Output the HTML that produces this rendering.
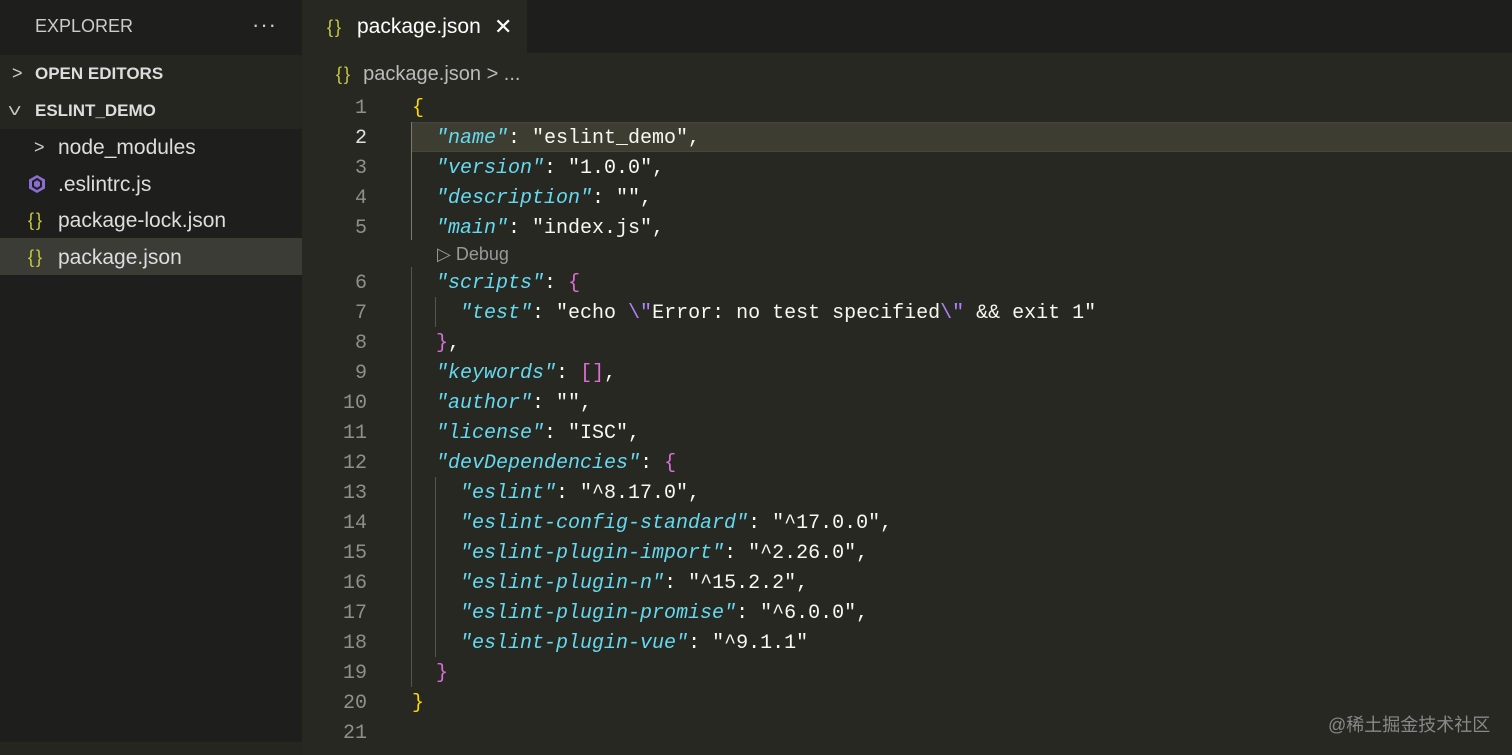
<!DOCTYPE html>
<html><head><meta charset="utf-8"><style>
body{margin:0;width:1512px;height:755px;overflow:hidden;background:#272822;font-family:"Liberation Sans",sans-serif;position:relative}
.side{position:absolute;left:0;top:0;width:302px;height:755px;background:#1e1f1c}
.hdr{position:absolute;left:35px;top:16px;color:#ccc;font-size:18px}
.dots{position:absolute;left:252px;top:12px;color:#ccc;font-size:22px;letter-spacing:1px}
.sec{position:absolute;left:0;width:302px;height:37px;background:#252620;color:#ddd;font-weight:bold;font-size:17px;line-height:37px}
.row{position:absolute;left:0;width:302px;height:37px;line-height:39px;color:#ddd;font-size:21px}
.chev{position:absolute;font-size:18px;color:#ccc;font-weight:normal}
.br{color:#cbcb41;font-size:18px;position:absolute;left:28px;letter-spacing:2px}
.tabbar{position:absolute;left:302px;top:0;width:1210px;height:53px;background:#1e1f1c}
.tab{position:absolute;left:302px;top:0;width:225px;height:53px;background:#272822;color:#fff;font-size:21px;line-height:54px}
.mono{font-family:"Liberation Mono",monospace;font-size:20px;white-space:pre}
.ln{position:absolute;left:330px;width:37px;text-align:right;color:#90908a}
.code{position:absolute;left:412px;color:#f8f8f2}
.k{color:#66d9ef;font-style:italic}.y{color:#ffd700}.p{color:#da70d6}.e{color:#ae81ff}
.guide{position:absolute;width:1px;background:#55564f}
#ed>div{margin-top:2px}
</style></head><body>
<div class="side">
<div class="hdr">EXPLORER</div><div class="dots">···</div>
<div class="sec" style="top:55px"><span class="chev" style="left:12px">&gt;</span><span style="position:absolute;left:35px">OPEN EDITORS</span></div>
<div class="sec" style="top:92px"><span class="chev" style="left:9px;transform:rotate(90deg) scaleY(1.3)">&gt;</span><span style="position:absolute;left:35px">ESLINT_DEMO</span></div>
<div class="row" style="top:128px"><span class="chev" style="left:34px">&gt;</span><span style="position:absolute;left:58px">node_modules</span></div>
<div class="row" style="top:165px"><svg style="position:absolute;left:27px;top:9px" width="20" height="20" viewBox="0 0 20 20"><polygon points="10,1 18,5.5 18,14.5 10,19 2,14.5 2,5.5" fill="#8c6cd0"/><polygon points="10,5 14,7.5 14,12.5 10,15 6,12.5 6,7.5" fill="none" stroke="#1e1f1c" stroke-width="2"/></svg><span style="position:absolute;left:58px">.eslintrc.js</span></div>
<div class="row" style="top:201px"><span class="br">{}</span><span style="position:absolute;left:58px">package-lock.json</span></div>
<div class="row" style="top:238px;background:#3b3c36"><span class="br">{}</span><span style="position:absolute;left:58px">package.json</span></div>
<div style="position:absolute;left:0;top:742px;width:302px;height:13px;background:#252620"></div>
</div>
<div class="tabbar"></div>
<div class="tab"><span class="br" style="left:25px">{}</span><span style="position:absolute;left:55px">package.json</span><span style="position:absolute;left:192px;font-size:22px">✕</span></div>
<div style="position:absolute;left:336px;top:63px;color:#bbb;font-size:20px"><span style="color:#cbcb41;font-size:18px;letter-spacing:2px">{}</span>&nbsp; package.json &gt; ...</div>
<div style="position:absolute;left:412px;top:122px;width:1100px;height:28px;background:#3e3d32;border:1px solid #46463e;border-left:none"></div>
<div class="guide" style="left:411px;top:122px;height:118px;background:#7a7a70"></div>
<div class="guide" style="left:411px;top:267px;height:420px"></div>
<div class="guide" style="left:435px;top:297px;height:30px"></div>
<div class="guide" style="left:435px;top:477px;height:180px"></div>
<div class="mono" id="ed">
<div class="ln" style="top:95px">1</div><div class="code" style="top:95px"><span class="y">{</span></div>
<div class="ln" style="top:125px;color:#e0e0e0">2</div><div class="code" style="top:125px">  <span class="k">"name"</span>: "eslint_demo",</div>
<div class="ln" style="top:155px">3</div><div class="code" style="top:155px">  <span class="k">"version"</span>: "1.0.0",</div>
<div class="ln" style="top:185px">4</div><div class="code" style="top:185px">  <span class="k">"description"</span>: "",</div>
<div class="ln" style="top:215px">5</div><div class="code" style="top:215px">  <span class="k">"main"</span>: "index.js",</div>
<div style="position:absolute;left:437px;top:242px;color:#999;font-family:'Liberation Sans',sans-serif;font-size:18px">▷ Debug</div>
<div class="ln" style="top:270px">6</div><div class="code" style="top:270px">  <span class="k">"scripts"</span>: <span class="p">{</span></div>
<div class="ln" style="top:300px">7</div><div class="code" style="top:300px">    <span class="k">"test"</span>: "echo <span class="e">\"</span>Error: no test specified<span class="e">\"</span> &amp;&amp; exit 1"</div>
<div class="ln" style="top:330px">8</div><div class="code" style="top:330px">  <span class="p">}</span>,</div>
<div class="ln" style="top:360px">9</div><div class="code" style="top:360px">  <span class="k">"keywords"</span>: <span class="p">[]</span>,</div>
<div class="ln" style="top:390px">10</div><div class="code" style="top:390px">  <span class="k">"author"</span>: "",</div>
<div class="ln" style="top:420px">11</div><div class="code" style="top:420px">  <span class="k">"license"</span>: "ISC",</div>
<div class="ln" style="top:450px">12</div><div class="code" style="top:450px">  <span class="k">"devDependencies"</span>: <span class="p">{</span></div>
<div class="ln" style="top:480px">13</div><div class="code" style="top:480px">    <span class="k">"eslint"</span>: "^8.17.0",</div>
<div class="ln" style="top:510px">14</div><div class="code" style="top:510px">    <span class="k">"eslint-config-standard"</span>: "^17.0.0",</div>
<div class="ln" style="top:540px">15</div><div class="code" style="top:540px">    <span class="k">"eslint-plugin-import"</span>: "^2.26.0",</div>
<div class="ln" style="top:570px">16</div><div class="code" style="top:570px">    <span class="k">"eslint-plugin-n"</span>: "^15.2.2",</div>
<div class="ln" style="top:600px">17</div><div class="code" style="top:600px">    <span class="k">"eslint-plugin-promise"</span>: "^6.0.0",</div>
<div class="ln" style="top:630px">18</div><div class="code" style="top:630px">    <span class="k">"eslint-plugin-vue"</span>: "^9.1.1"</div>
<div class="ln" style="top:660px">19</div><div class="code" style="top:660px">  <span class="p">}</span></div>
<div class="ln" style="top:690px">20</div><div class="code" style="top:690px"><span class="y">}</span></div>
<div class="ln" style="top:720px">21</div>
</div>
<div style="position:absolute;left:1328px;top:711px;color:#888;font-size:18px;font-family:'Liberation Sans','Noto Sans CJK SC',sans-serif">@稀土掘金技术社区</div>
</body></html>
